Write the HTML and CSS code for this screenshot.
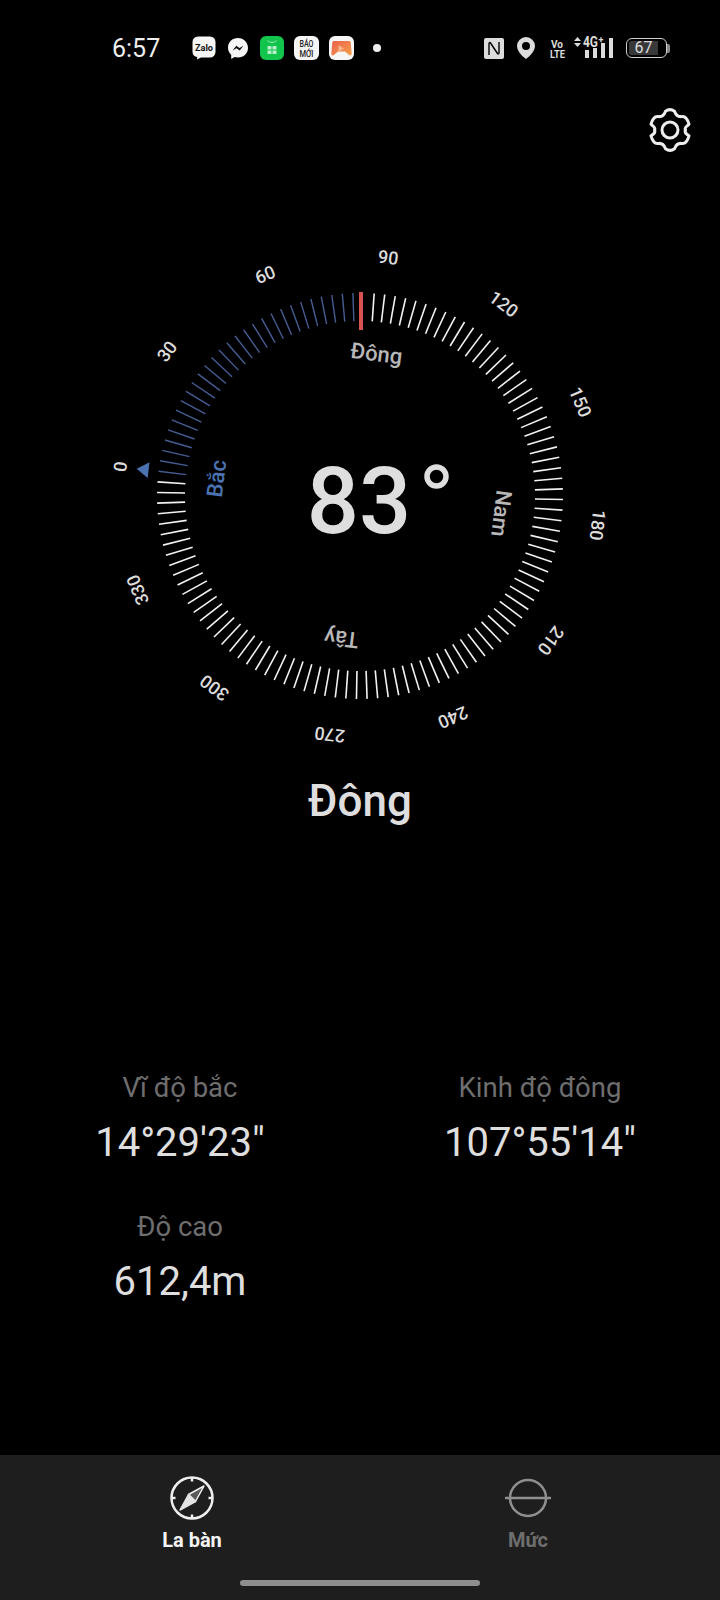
FILE: index.html
```html
<!DOCTYPE html>
<html lang="vi">
<head>
<meta charset="utf-8">
<title>La bàn</title>
<link rel="stylesheet" href="styles.css">
</head>
<body>
<div class="screen">
  <header class="status">
    <span class="time">6:57</span>
    <div class="apps">
      <svg class="ic" width="24" height="24" viewBox="0 0 24 24"><path class="w" d="M6 .5h12a5.500 5.500 0 0 1 5.500 5.500v10a5.500 5.500 0 0 1-5.500 5.500H9l-4 2 .2-2.500A5.500 5.500 0 0 1 .5 16V6A5.500 5.500 0 0 1 6 .5z"/><text class="zalo" x="12" y="14.500" text-anchor="middle" textLength="18" lengthAdjust="spacingAndGlyphs">Zalo</text></svg>
      <svg class="ic" width="24" height="24" viewBox="0 0 24 24"><path class="w" d="M12 2C6.200 2 2 6.200 2 11.500c0 3 1.200 5.500 3.200 7.200V23l3.400-1.900c1.100.3 2.200.4 3.400.4 5.800 0 10-4.200 10-9.500S17.800 2 12 2z"/><path class="m" d="M6.500 14.500l3.800-4.800 3.200 2.300 4-2.300-3.800 4.800-3.200-2.300z"/></svg>
      <svg class="ic" width="24" height="24" viewBox="0 0 24 24"><rect class="g" width="24" height="24" rx="6"/><path class="gl" d="M7.500 4.500c1.500 2.500 7.500 2.500 9 0"/><path class="gd" d="M7.500 10h4v3.500h-4zM12.500 10h4v3.500h-4zM7.500 14.500h4V18h-4zM12.500 14.500h4V18h-4z"/></svg>
      <svg class="ic" width="25" height="24" viewBox="0 0 25 24"><rect class="w" width="25" height="24" rx="6"/><text class="bao" x="12.500" y="11" text-anchor="middle" textLength="14" lengthAdjust="spacingAndGlyphs">BÁO</text><text class="bao" x="12.500" y="20.500" text-anchor="middle" textLength="14" lengthAdjust="spacingAndGlyphs">MỚI</text></svg>
      <svg class="ic" width="25" height="24" viewBox="0 0 25 24"><defs><linearGradient id="pad" x1="0" y1="0" x2="1" y2="1"><stop offset="0" stop-color="#ec5f4e"/><stop offset="1" stop-color="#f5a24a"/></linearGradient></defs><rect class="w" width="25" height="24" rx="6"/><path class="o" d="M5 5h15c1 0 1.500.6 1.700 1.500l1 11c.2 1.800-1.500 2.500-2.700 1.500L16 15.500H9L5 19c-1.200 1-2.900.3-2.700-1.500l1-11C3.500 5.600 4 5 5 5z"/><path class="o2" d="M9.500 9l5.500 3.500-5.500 3.500z"/></svg>
      <span class="dot"></span>
    </div>
    <div class="sys">
      <svg class="ic" width="20" height="21" viewBox="0 0 20 21"><rect class="f" width="20" height="21" rx="2"/><path class="nfc" d="M5 17V5.500c0-1 1-1.200 1.500-.5l7 10.500c.5.700 1.500.5 1.500-.5V4"/></svg>
      <svg class="ic" width="18" height="22" viewBox="0 0 18 22"><path class="f" d="M9 0a9 9 0 0 1 9 9c0 5-5 10-9 13C5 19 0 14 0 9a9 9 0 0 1 9-9zm0 5a4 4 0 1 0 0 8 4 4 0 0 0 0-8z"/></svg>
      <svg class="ic" width="17" height="21" viewBox="0 0 17 21"><text class="vo" x="3" y="9.500" textLength="12" lengthAdjust="spacingAndGlyphs">Vo</text><text class="vo" x="2" y="20" textLength="15" lengthAdjust="spacingAndGlyphs">LTE</text></svg>
      <svg class="ic signal" width="39" height="22" viewBox="0 0 39 22"><path class="f" d="M3.500 0L7 4H0zM3.500 10L0 6h7z"/><text class="net" x="9" y="10" textLength="15" lengthAdjust="spacingAndGlyphs">4G</text><text class="plus" x="24.500" y="6">+</text><rect class="f" x="11" y="13" width="4" height="8"/><rect class="f" x="19" y="11" width="4" height="10"/><rect class="f" x="27" y="6" width="4" height="15"/><rect class="f" x="35" y="1" width="4" height="20"/></svg>
      <div class="battery"><div class="cell"><span class="level">67</span></div><span class="tip"></span></div>
    </div>
  </header>

  <div class="tools">
    <svg class="gear" width="44" height="44" viewBox="0 0 44 44"><path d="M17.500 3.200Q22 0 26.500 3.200Q28.500 9 33.500 8.600Q38.500 7.500 41 16.200Q36 20 37.500 22Q36 25 41 27.800Q38.500 36.500 33.500 35.400Q28.500 35 26.500 40.800Q22 44 17.500 40.800Q15.500 35 10.500 35.400Q5.500 36.500 3 27.800Q8 25 6.500 22Q8 20 3 16.200Q5.500 7.500 10.500 8.600Q15.500 9 17.500 3.200z"/><circle cx="22" cy="22" r="8"/></svg>
  </div>

  <svg class="dial" id="dial" width="560" height="560" viewBox="-280 -280 560 560">
    <g id="ticks" transform="rotate(-83)"></g>
    <rect class="needle" x="-1" y="-204" width="4" height="38"/>
    <g transform="translate(-1 0) rotate(-83)">
      <path class="tri" d="M0-224l-8 12h16z"/>
      <text class="deg" y="-234">0</text>
      <text class="deg" y="-234" transform="rotate(30)">30</text>
      <text class="deg" y="-234" transform="rotate(60)">60</text>
      <text class="deg" y="-234" transform="rotate(90)">90</text>
      <text class="deg" y="-234" transform="rotate(120)">120</text>
      <text class="deg" y="-234" transform="rotate(150)">150</text>
      <text class="deg" y="-234" transform="rotate(180)">180</text>
      <text class="deg" y="-234" transform="rotate(210)">210</text>
      <text class="deg" y="-234" transform="rotate(240)">240</text>
      <text class="deg" y="-234" transform="rotate(270)">270</text>
      <text class="deg" y="-234" transform="rotate(300)">300</text>
      <text class="deg" y="-234" transform="rotate(330)">330</text>
      <text class="dir north" y="-136">Bắc</text>
      <text class="dir" y="-136" transform="rotate(90)">Đông</text>
      <text class="dir" y="-136" transform="rotate(180)">Nam</text>
      <text class="dir" y="-136" transform="rotate(270)">Tây</text>
    </g>
    <text class="reading" x="-1" y="37">83</text>
    <circle class="ring" cx="76.500" cy="-19.500" r="9.500"/>
  </svg>

  <h1 class="heading">Đông</h1>

  <section class="data">
    <div class="item"><span class="label">Vĩ độ bắc</span><span class="value">14°29'23"</span></div>
    <div class="item"><span class="label">Kinh độ đông</span><span class="value">107°55'14"</span></div>
    <div class="item"><span class="label">Độ cao</span><span class="value">612,4m</span></div>
  </section>

  <nav class="tabs">
    <div class="tab active">
      <svg width="46" height="46" viewBox="0 0 46 46"><circle class="cs" cx="23" cy="23" r="20.500"/><path class="cs" d="M23 2.500v4M23 39.500v4M2.500 23h4M39.500 23h4"/><path class="cn" d="M35 11L26.500 26.500 19.500 19.500z"/><path class="cf" d="M11 35L19.500 19.500 26.500 26.500z"/></svg>
      <span>La bàn</span>
    </div>
    <div class="tab">
      <svg width="46" height="46" viewBox="0 0 46 46"><circle class="ls" cx="23" cy="23" r="18"/><path class="ls" d="M0 23h46"/></svg>
      <span>Mức</span>
    </div>
  </nav>
  <div class="home"></div>
</div>
<script src="script.js"></script>
</body>
</html>
```

FILE: styles.css
```css
* { box-sizing: border-box; margin: 0; padding: 0; }
html, body { background: #000; }
body { font-family: Roboto, "Noto Sans", sans-serif; color: #dedede; }
.screen { width: 720px; height: 1600px; display: flex; flex-direction: column; position: relative; overflow: hidden; }

.status { height: 96px; display: flex; align-items: center; padding-left: 112px; padding-right: 50px; }
.time { font-size: 25px; color: #eee; width: 80px; }
.apps { display: flex; align-items: center; gap: 10px; }
.ic { display: block; flex: none; overflow: visible; }
.dot { width: 8px; height: 8px; border-radius: 50%; background: #eee; margin-left: 9px; }
.sys { display: flex; align-items: center; gap: 13px; margin-left: auto; }
.w { fill: #f6f6f6; }
.zalo { font: 700 9.500px Roboto, sans-serif; fill: #111; }
.m { fill: #111; }
.g { fill: #10c44c; }
.gl { fill: none; stroke: #a8ecc0; stroke-width: 1; }
.gd { fill: #b9f0cb; }
.bao { font: 500 9.500px Roboto, sans-serif; fill: #222; }
.o { fill: url(#pad); }
.o2 { fill: #f7b48a; }
.f { fill: #dcdcdc; }
.nfc { fill: none; stroke: #000; stroke-width: 1.400; }
.vo { font: 700 11.500px Roboto, sans-serif; fill: #dcdcdc; }
.signal { margin-left: -4px; }
.net { font: 700 14px Roboto, sans-serif; fill: #dcdcdc; }
.plus { font: 700 9px Roboto, sans-serif; fill: #dcdcdc; }
.battery { display: flex; align-items: center; }
.cell { width: 41px; height: 20px; border: 1.500px solid #cfcfcf; border-radius: 6px; padding: 2px; display: flex; }
.level { width: 29px; background: #383838; border-radius: 2px 0 0 2px; font-size: 16px; line-height: 13px; color: #ddd; text-align: center; white-space: nowrap; }
.tip { width: 3px; height: 9px; background: #8a8a8a; border-radius: 0 2px 2px 0; }

.tools { display: flex; justify-content: flex-end; padding-right: 28px; margin-top: 12px; height: 44px; }
.gear { fill: none; stroke: #eee; stroke-width: 3; stroke-linejoin: round; }

.dial { display: block; margin: 64px auto 0; flex: none; }
.tick { stroke: #f2f2f2; stroke-width: 1.600; }
.tick.past { stroke: #465d94; stroke-width: 1.400; }
.needle { fill: #d9524f; }
.tri { fill: #4a72b0; }
.deg { font-size: 18px; font-weight: 500; fill: #dcdcdc; text-anchor: middle; }
.dir { font-size: 22px; font-weight: 500; fill: #b8b8b8; text-anchor: middle; }
.dir.north { fill: #4a72b0; }
.reading { font-size: 92px; font-weight: 500; fill: #dedede; text-anchor: middle; }
.ring { fill: none; stroke: #dedede; stroke-width: 5.500; }

.heading { font-size: 44px; font-weight: 500; line-height: 50px; text-align: center; color: #dedede; }

.data { display: grid; grid-template-columns: 360px 360px; row-gap: 45px; margin-top: 246px; }
.item { display: flex; flex-direction: column; align-items: center; gap: 16px; }
.label { font-size: 27.500px; line-height: 32px; color: #6e6e6e; }
.value { font-size: 40px; line-height: 46px; color: #dedede; }

.tabs { margin-top: auto; height: 145px; background: #1e1e1e; display: grid; grid-template-columns: 192px 336px; padding-top: 20px; }
.tab { display: flex; flex-direction: column; align-items: center; width: 0; margin-left: 192px; font-size: 20px; font-weight: 700; color: #6e6e6e; white-space: nowrap; gap: 7px; }
.tab + .tab { margin-left: 336px; }
.tab.active { color: #f4f4f4; }
.cs { fill: none; stroke: #eee; stroke-width: 2.500; }
.cn { fill: #5a5a5a; stroke: #eee; stroke-width: 1.500; stroke-linejoin: round; }
.cf { fill: #e4e4e4; stroke: #e4e4e4; stroke-width: 1.500; stroke-linejoin: round; }
.ls { fill: none; stroke: #8f8f8f; stroke-width: 2.500; }
.home { position: absolute; left: 240px; bottom: 14px; width: 240px; height: 6px; border-radius: 3px; background: #8f8f8f; }
```

FILE: script.js
```js
const ns = 'http://www.w3.org/2000/svg';
const host = document.getElementById('ticks');
for (let deg = 0; deg < 360; deg += 3) {
  if (deg === 84) continue;
  const line = document.createElementNS(ns, 'line');
  line.setAttribute('x1', 0);
  line.setAttribute('x2', 0);
  line.setAttribute('y1', -203);
  line.setAttribute('y2', -175);
  line.setAttribute('transform', `rotate(${deg})`);
  line.setAttribute('class', deg < 84 ? 'tick past' : 'tick');
  host.appendChild(line);
}
```
